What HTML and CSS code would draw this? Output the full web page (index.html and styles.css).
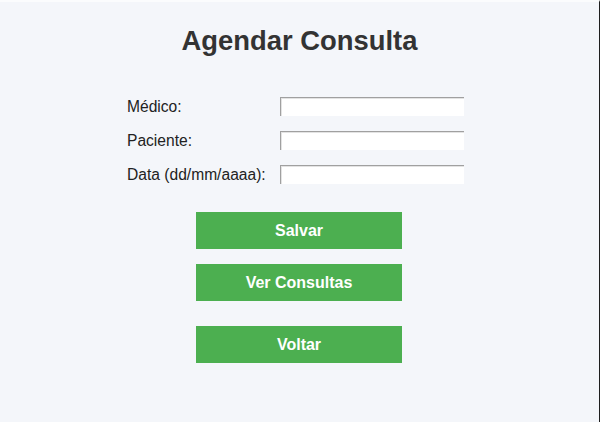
FILE: index.html
```html
<!DOCTYPE html>
<html lang="pt">
<head>
<meta charset="utf-8">
<title>Agendar Consulta</title>
<link rel="stylesheet" href="styles.css">
</head>
<body>
<div class="window">
  <h1 class="title">Agendar Consulta</h1>
  <div class="form">
    <label class="label" for="medico">Médico:</label>
    <input class="field" id="medico" type="text">
    <label class="label" for="paciente">Paciente:</label>
    <input class="field" id="paciente" type="text">
    <label class="label" for="data">Data (dd/mm/aaaa):</label>
    <input class="field" id="data" type="text">
  </div>
  <div class="actions">
    <button class="btn">Salvar</button>
    <button class="btn">Ver Consultas</button>
    <button class="btn btn-back">Voltar</button>
  </div>
</div>
</body>
</html>
```
FILE: styles.css
```css
html, body {
  margin: 0;
  padding: 0;
}
body {
  background: #f4f6fa;
  font-family: "Liberation Sans", Arial, sans-serif;
}
.window {
  box-sizing: border-box;
  width: 600px;
  height: 422px;
  border-top: 2px solid #fbfcfd;
  border-right: 1px solid #1e1e1e;
  padding-top: 23px;
  display: flex;
  flex-direction: column;
}
.title {
  margin: 0;
  font-size: 27.4px;
  line-height: 32px;
  font-weight: 700;
  color: #333333;
  text-align: center;
}
.form {
  margin-top: 40px;
  padding-left: 127px;
  display: grid;
  grid-template-columns: 153px 184px;
  row-gap: 15px;
  align-items: center;
}
.label {
  font-size: 15.6px;
  color: #222222;
  line-height: 19px;
}
.field {
  box-sizing: border-box;
  width: 184px;
  height: 19px;
  margin: 0;
  padding: 0 3px;
  border: none;
  border-top: 1px solid #a0a0a0;
  border-left: 1px solid #a0a0a0;
  box-shadow: inset 1px 1px 0 #e3e3e3;
  background: #ffffff;
  font: 15px "Liberation Sans", Arial, sans-serif;
  outline: none;
}
.actions {
  margin-top: 28px;
  padding-left: 196px;
  display: flex;
  flex-direction: column;
  gap: 15px;
}
.btn {
  width: 206px;
  height: 37px;
  margin: 0;
  padding: 0;
  border: none;
  background: #4caf50;
  color: #ffffff;
  font: 700 16px "Liberation Sans", Arial, sans-serif;
  cursor: pointer;
}
.btn-back {
  margin-top: 10px;
}
```
